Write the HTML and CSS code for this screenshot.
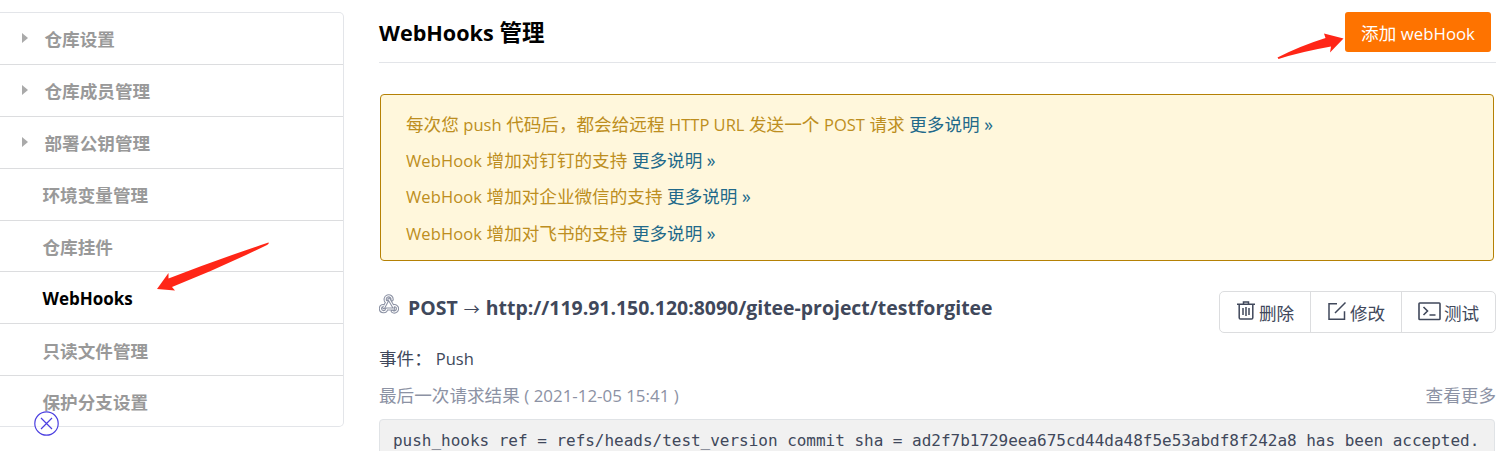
FILE: index.html
```html
<!DOCTYPE html>
<html lang="zh-CN">
<head>
<meta charset="utf-8">
<title>WebHooks 管理</title>
<link rel="stylesheet" href="styles.css">
</head>
<body>
<div class="page">
  <nav class="sidebar">
    <a class="item parent"><i class="caret"></i>仓库设置</a>
    <a class="item parent"><i class="caret"></i>仓库成员管理</a>
    <a class="item parent"><i class="caret"></i>部署公钥管理</a>
    <a class="item">环境变量管理</a>
    <a class="item">仓库挂件</a>
    <a class="item active">WebHooks</a>
    <a class="item">只读文件管理</a>
    <a class="item">保护分支设置</a>
  </nav>
  <main class="content">
    <header class="head">
      <h1 class="title"><span class="title-en">WebHooks</span> 管理</h1>
      <button class="add">添加 <span class="en">webHook</span></button>
    </header>
    <section class="notice">
      <p class="line">每次您 <span class="en">push</span> 代码后，都会给远程 <span class="en">HTTP URL</span> 发送一个 <span class="en">POST</span> 请求 <a class="more">更多说明 »</a></p>
      <p class="line"><span class="en wide">WebHook</span> 增加对钉钉的支持 <a class="more">更多说明 »</a></p>
      <p class="line"><span class="en wide">WebHook</span> 增加对企业微信的支持 <a class="more">更多说明 »</a></p>
      <p class="line"><span class="en wide">WebHook</span> 增加对飞书的支持 <a class="more">更多说明 »</a></p>
    </section>
    <section class="hook">
      <div class="hook-head">
        <svg class="hook-icon" width="20" height="20" viewBox="0 0 20 20" fill="none" stroke-linecap="round" stroke-linejoin="round">
          <g stroke="#8c92a4" stroke-width="3.2"><path d="M7.200 7.800A3.500 3.500 0 1 1 13.100 5.800M10 5.200L14.600 13M8 7.500L4.800 13.500M4.300 11.500A3.100 3.100 0 1 0 7.600 15H14.800M14.300 11.800A3.200 3.200 0 1 1 13.300 17.300"/></g>
          <g stroke="#fff" stroke-width="1.100"><path d="M7.200 7.800A3.500 3.500 0 1 1 13.100 5.800M10 5.200L14.600 13M8 7.500L4.800 13.500M4.300 11.500A3.100 3.100 0 1 0 7.600 15H14.800M14.300 11.800A3.200 3.200 0 1 1 13.300 17.300"/></g>
        </svg>
        <h2 class="url">POST <span class="arrow">→</span> http://119.91.150.120:8090/gitee-project/testforgitee</h2>
        <div class="actions">
          <a class="action"><svg width="20" height="20" viewBox="0 0 20 20" fill="none" stroke="#40485b" stroke-width="1.5"><path d="M1 3.200h18M3.200 3.500v13.200q0 1.300 1.300 1.300h11q1.300 0 1.300-1.300V3.500M7.500 2.500V1h5v1.500M7 7v7M10 6v9M13 7v7"/></svg>删除</a>
          <a class="action"><svg width="20" height="20" viewBox="0 0 20 20" fill="none" stroke="#40485b" stroke-width="1.500"><path d="M10 2.700H2v15.500h15.500v-8M8 12L18.500 1.500"/></svg>修改</a>
          <a class="action test"><svg width="23" height="20" viewBox="0 0 23 20" fill="none" stroke="#40485b" stroke-width="1.600"><rect x="1" y="2" width="21" height="16.500" rx=".8"/><path d="M5.500 6l4 4-4 4M11.500 14h6"/></svg>测试</a>
        </div>
      </div>
      <p class="event">事件：<span class="en">Push</span></p>
      <div class="result"><span>最后一次请求结果 <span class="en date">( 2021-12-05 15:41 )</span></span><a>查看更多</a></div>
      <pre class="log">push_hooks ref = refs/heads/test_version commit sha = ad2f7b1729eea675cd44da48f5e53abdf8f242a8 has been accepted.</pre>
    </section>
  </main>
</div>
<svg class="marks" width="1505" height="451" viewBox="0 0 1505 451">
  <path fill="#ff2617" d="M157 289L168.500 273V278.500Q216 260 268.500 242.500Q269.500 243.500 267 245Q220 268 172 287L175 290.500Z"/>
  <path fill="#ff2617" d="M1343.500 38.500L1324 33.500L1325.500 38Q1300 46 1277.500 57.500L1278.500 59Q1300 52 1331 46.500L1330 52.500Z"/>
  <g fill="none" stroke="#4b3fe0" stroke-width="1.2"><circle cx="46.500" cy="423.500" r="11.700" fill="#fff" fill-opacity=".6"/><path d="M41 418l11 11M52 418l-11 11"/></g>
</svg>
</body>
</html>
```
FILE: styles.css
```css
* { box-sizing: border-box; }
body {
  margin: 0;
  height: 451px;
  overflow: hidden;
  background: #fff;
  color: #40485b;
  font: 17.6px "Open Sans", "Noto Sans CJK SC", sans-serif;
}
h1, h2, p, pre { margin: 0; }
.page { display: flex; gap: 35px; padding-top: 12px; height: 451px; overflow: hidden; }
.sidebar {
  width: 344px;
  height: 415px;
  flex: none;
  display: flex;
  flex-direction: column;
  border: 1px solid #e3e5e9;
  border-left: 0;
  border-radius: 0 5px 5px 0;
}
.item {
  flex: 1;
  display: flex;
  align-items: center;
  padding: 2px 0 0 42.5px;
  border-bottom: 1px solid #dcdddf;
  color: #999;
  font-weight: 700;
  line-height: 26px;
}
.item:last-child { flex-basis: -1px; border-bottom: 0; padding-top: 1px; }
.parent { padding-left: 21px; }
.active { color: #000; font-size: 17px; }
.caret {
  border: 5px solid transparent;
  border-left: 6px solid #aaa;
  border-right: 0;
  margin: -3px 16.500px 0 1px;
}
.en { font-size: 16.5px; }
.wide { letter-spacing: .1px; }
.content { width: 1117px; flex: none; }
.head {
  height: 51px;
  display: flex;
  justify-content: space-between;
  align-items: flex-start;
  border-bottom: 1px solid #e3e5e9;
}
.title { color: #000; font-size: 22.5px; line-height: 42px; }
.title-en { font-size: 21.6px; }
.add {
  width: 146px;
  height: 40px;
  margin-right: 5px;
  padding: 0;
  border: 0;
  border-radius: 3px;
  background: #fe7300;
  color: #fff;
  font: inherit;
}
.add .en { font-size: 16.8px; }
.notice {
  height: 167px;
  width: 1114px;
  margin: 31px 0 0 1px;
  padding: 11px 25px;
  border: 1px solid #b58105;
  border-radius: 4px;
  background: #fff7dc;
  color: #bd8e20;
}
.line { height: 36.2px; line-height: 36px; white-space: nowrap; }
.more { color: #21698a; }
.hook-head { display: flex; height: 42px; margin-top: 30px; }
.hook-icon { margin: 3px 9px 0 0; }
.url { flex: 1; font-size: 19.45px; line-height: 34px; white-space: nowrap; }
.arrow { margin: 0 1px; font-size: 16px; font-weight: 400; }
.actions {
  display: flex;
  width: 277px;
  height: 42px;
  border: 1px solid #dcdddf;
  border-radius: 5px;
}
.action {
  width: 91px;
  display: flex;
  align-items: center;
  justify-content: center;
  gap: 3px;
  border-left: 1px solid #dcdddf;
}
.action:first-child { width: 90px; border-left: 0; }
.test { flex: 1; }
.action svg { margin-top: -3px; }
.event { margin-top: 12px; line-height: 26px; }
.event .en { margin-left: 4px; }
.result {
  display: flex;
  justify-content: space-between;
  margin-top: 10px;
  line-height: 26px;
  color: #8c92a4;
}
.date { font-size: 16.9px; }
.log {
  height: 60px;
  width: 1116px;
  margin-top: 10px;
  padding: 8px 13px;
  border: 1px solid #e0e3e6;
  border-radius: 4px;
  background: #f1f1f1;
  font: 16px/26px "DejaVu Sans Mono", monospace;
  letter-spacing: -.02px;
}
.marks { position: absolute; left: 0; top: 0; pointer-events: none; }
```
